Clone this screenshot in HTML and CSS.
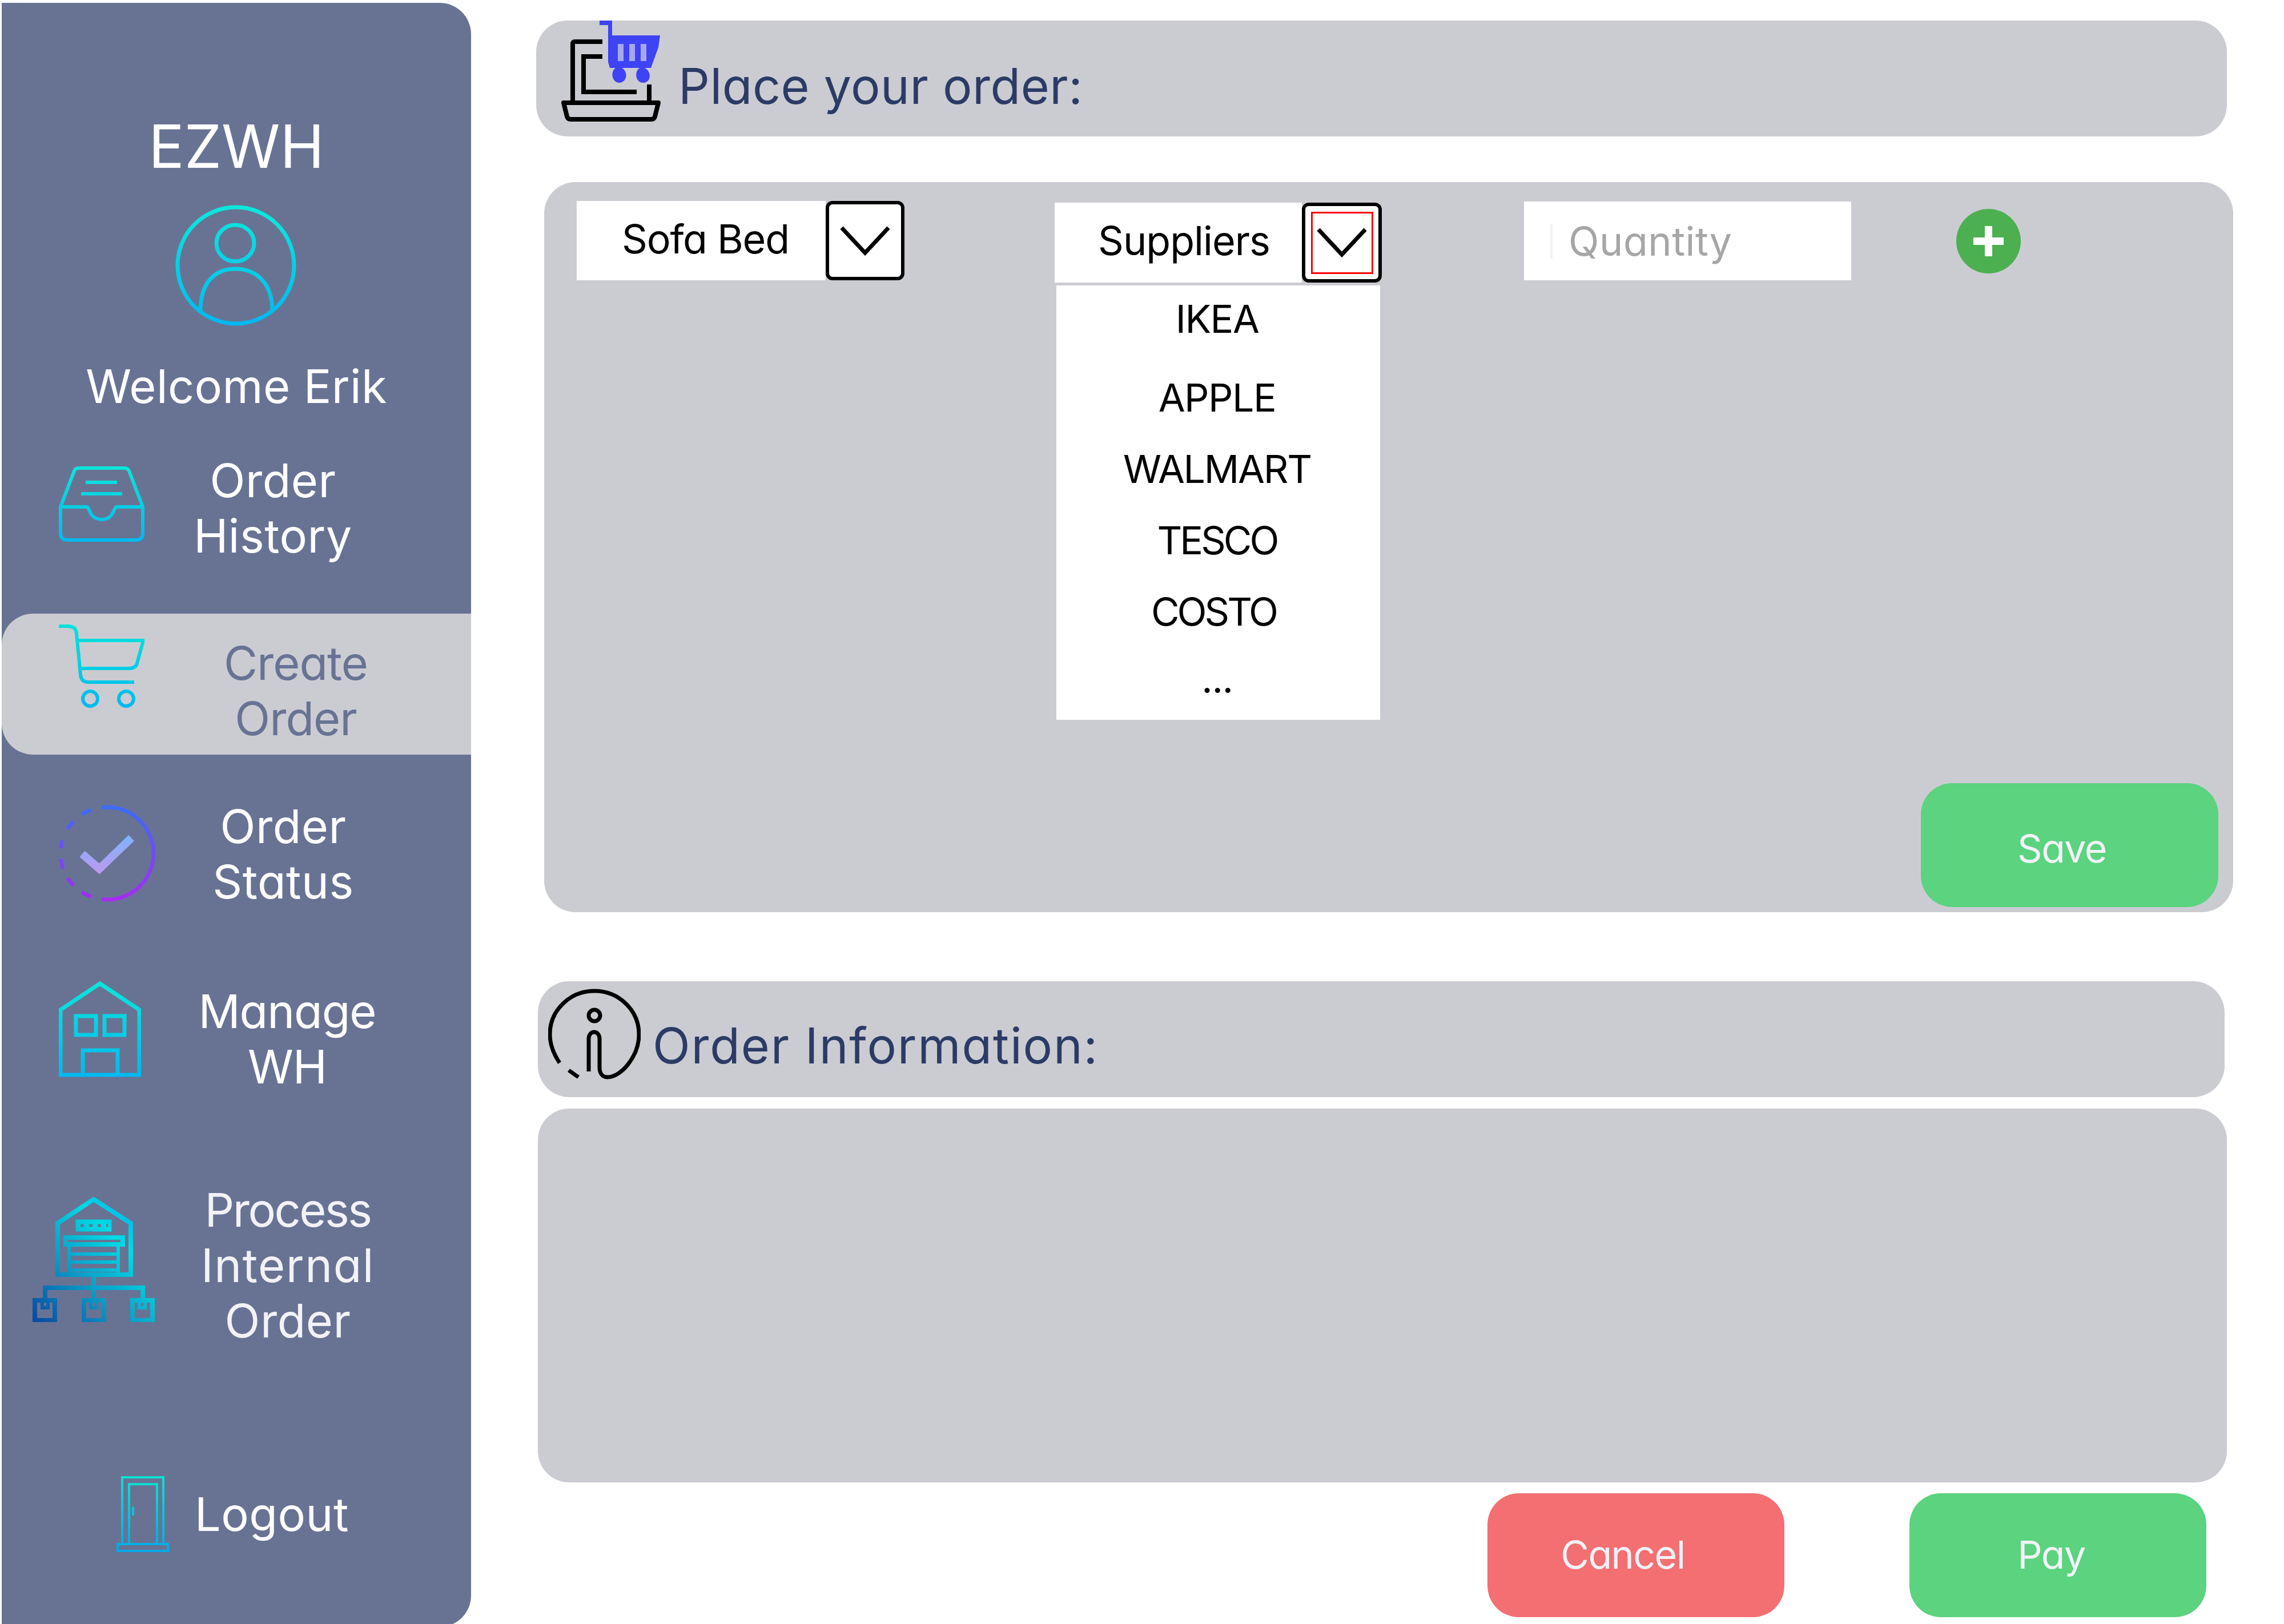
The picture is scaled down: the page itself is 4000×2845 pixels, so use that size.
FILE: index.html
```html
<!DOCTYPE html>
<html lang="en">
<head>
<meta charset="utf-8">
<title>EZWH - Create Order</title>
<link rel="stylesheet" href="styles.css">
</head>
<body>
<div class="app">
  <aside class="sidebar">
    <h1 class="brand">EZWH</h1>
    <svg class="avatar" viewBox="0 0 212 212" fill="none" stroke="url(#gAvatar)" stroke-width="7">
      <defs><linearGradient id="gAvatar" gradientUnits="userSpaceOnUse" x1="0" y1="0" x2="0" y2="212"><stop offset="0" stop-color="#0beadb"/><stop offset="1" stop-color="#00b7f1"/></linearGradient></defs>
      <circle cx="106" cy="106" r="102"/>
      <ellipse cx="105" cy="67" rx="33" ry="32"/>
      <path d="M44 186C44 135 70 112 105 112S170 135 170 186"/>
    </svg>
    <p class="welcome">Welcome Erik</p>
    <nav class="nav">
      <a class="nav-item item-history">
        <svg class="nav-icon icon-inbox" viewBox="0 0 150 134" fill="none" stroke="url(#gInbox)" stroke-width="6" stroke-linejoin="round">
          <defs><linearGradient id="gInbox" gradientUnits="userSpaceOnUse" x1="0" y1="0" x2="0" y2="134"><stop offset="0" stop-color="#0ce6d9"/><stop offset="1" stop-color="#00b9f0"/></linearGradient></defs>
          <path d="M3 72L27 9Q29 4 35 4H115Q121 4 123 9L147 72"/>
          <path d="M47 29H102M39 49H111"/>
          <path d="M3 72H49C54 72 53 94 75 94S96 72 101 72H147V118Q147 130 135 130H15Q3 130 3 118Z"/>
        </svg>
        <span class="nav-label">Order<br>History</span>
      </a>
      <a class="nav-item item-create">
        <svg class="nav-icon icon-cart" viewBox="0 0 150 148" fill="none" stroke="url(#gCart)" stroke-width="6">
          <defs><linearGradient id="gCart" gradientUnits="userSpaceOnUse" x1="0" y1="0" x2="0" y2="148"><stop offset="0" stop-color="#00e4da"/><stop offset="1" stop-color="#00b9ef"/></linearGradient></defs>
          <path d="M0 5H16Q30 5 31 18L38 90Q39 103 52 103H132"/>
          <path d="M30 30H148L137 70Q135 79 122 79H36"/>
          <circle cx="55" cy="132" r="13"/>
          <circle cx="118" cy="132" r="13"/>
        </svg>
        <span class="nav-label">Create<br>Order</span>
      </a>
      <a class="nav-item item-status">
        <svg class="nav-icon icon-check" viewBox="0 0 170 170" fill="none" stroke-width="7">
          <defs>
            <linearGradient id="gRing" gradientUnits="userSpaceOnUse" x1="0" y1="0" x2="0" y2="170"><stop offset="0" stop-color="#3b6ef5"/><stop offset="1" stop-color="#a62cf0"/></linearGradient>
            <linearGradient id="gTick" gradientUnits="userSpaceOnUse" x1="0" y1="55" x2="0" y2="115"><stop offset="0" stop-color="#7fb4ff"/><stop offset="1" stop-color="#b99aee"/></linearGradient>
          </defs>
          <path stroke="url(#gRing)" d="M75 4.6A81 81 0 1 1 75 165.4"/>
          <path stroke="url(#gRing)" d="M57 9Q47 12 40 17M26 29Q20 35 15 42M6 62Q4 68 4 76M4 95Q5 103 7 112M15 128Q20 135 26 141M40 153Q48 158 57 161"/>
          <path stroke="url(#gTick)" stroke-width="14" d="M41 86L71 112L127 58"/>
        </svg>
        <span class="nav-label">Order<br>Status</span>
      </a>
      <a class="nav-item item-manage">
        <svg class="nav-icon icon-house" viewBox="0 0 144 168" fill="none" stroke="url(#gHouse)" stroke-width="7">
          <defs><linearGradient id="gHouse" gradientUnits="userSpaceOnUse" x1="0" y1="0" x2="0" y2="168"><stop offset="0" stop-color="#0be7d9"/><stop offset="1" stop-color="#00b8f0"/></linearGradient></defs>
          <path d="M3 164V50L72 4L141 50V164Z"/>
          <rect x="30" y="61" width="35" height="33"/>
          <rect x="80" y="61" width="35" height="33"/>
          <path d="M42 164V121H103V164"/>
        </svg>
        <span class="nav-label">Manage<br>WH</span>
      </a>
      <a class="nav-item item-process">
        <svg class="nav-icon icon-depot" viewBox="0 0 214 219" fill="none" stroke="url(#gDepot)" stroke-width="8">
          <defs><linearGradient id="gDepot" gradientUnits="userSpaceOnUse" x1="0" y1="219" x2="180" y2="30"><stop offset="0" stop-color="#0a46a0"/><stop offset="0.45" stop-color="#0a9fc8"/><stop offset="0.8" stop-color="#00dbe5"/><stop offset="1" stop-color="#00b6ea"/></linearGradient></defs>
          <path d="M44 136V46L107 4L172 46V136Z"/>
          <rect x="78" y="42" width="58" height="16" stroke-width="5" fill="url(#gDepot)"/>
          <path stroke="#687394" stroke-width="5" stroke-dasharray="6 9" d="M84 50H132"/>
          <rect x="58" y="71" width="100" height="12"/>
          <path d="M64 84V136M150 84V136M64 100H150M64 114H150M64 128H150" stroke-width="6"/>
          <path d="M107 138V178M22 178V159H193V178"/>
          <rect x="4" y="181" width="35" height="35"/>
          <rect x="90" y="181" width="35" height="35"/>
          <rect x="175" y="181" width="35" height="35"/>
          <path stroke-width="6" d="M17 184V194H27V184M102 184V194H112V184M187 184V194H197V184"/>
        </svg>
        <span class="nav-label"><span class="line-tight">Process</span><br><span class="line-wide">Internal</span><br>Order</span>
      </a>
      <a class="nav-item item-logout">
        <svg class="nav-icon icon-door" viewBox="0 0 92 133" fill="none" stroke="url(#gDoor)" stroke-width="4">
          <defs><linearGradient id="gDoor" gradientUnits="userSpaceOnUse" x1="0" y1="0" x2="0" y2="133"><stop offset="0" stop-color="#0de2d2"/><stop offset="1" stop-color="#00a8e8"/></linearGradient></defs>
          <path d="M10 118V2H82V118"/>
          <path d="M22 118V14H71V118"/>
          <rect x="2" y="119" width="88" height="12"/>
          <path d="M29 54V69"/>
        </svg>
        <span class="nav-label">Logout</span>
      </a>
    </nav>
  </aside>
  <main class="main">
    <header class="bar bar-place">
      <svg class="bar-icon icon-order" viewBox="0 0 176 177" fill="none" stroke="#000" stroke-width="8">
        <path d="M21 141V41Q21 37 25 37H73"/>
        <path d="M73 63H40V125H133"/>
        <path d="M155 112V141"/>
        <path d="M5 144H171L165 168Q164 173 158 173H18Q12 173 11 168Z" stroke-linejoin="round"/>
        <path fill="#3e43f6" stroke="none" d="M68 0H90V26H174L171 47L158 83H147C158 88 160 106 146 109C131 110 128 90 138 83H107C117 88 118 106 104 109C90 110 86 90 96 83H86L83 73V8H68Z"/>
        <path fill="#a6a8ed" stroke="none" d="M100 41H110V71H100ZM120 41H130V71H120ZM140 41H150V71H140Z"/>
      </svg>
      <h2 class="bar-title title-place">Place your order:</h2>
    </header>
    <section class="order-card">
      <div class="order-row">
        <div class="select select-product">
          <span class="select-value">Sofa Bed</span>
          <span class="select-toggle">
            <svg class="chevron" viewBox="0 0 88 52" fill="none" stroke="#000" stroke-width="7"><path d="M3 3L44 47L85 3"/></svg>
          </span>
        </div>
        <div class="select select-supplier">
          <span class="select-value">Suppliers</span>
          <span class="select-toggle toggle-focus">
            <span class="focus-ring"><svg class="chevron" viewBox="0 0 88 52" fill="none" stroke="#000" stroke-width="7"><path d="M3 3L44 47L85 3"/></svg></span>
          </span>
          <ul class="menu">
            <li class="menu-first">IKEA</li>
            <li class="menu-second">APPLE</li>
            <li class="menu-walmart">WALMART</li>
            <li class="menu-tight">TESCO</li>
            <li class="menu-tight menu-shift">COSTO</li>
            <li class="menu-more">...</li>
          </ul>
        </div>
        <div class="qty"><span class="caret"></span><span class="qty-text">Quantity</span></div>
        <span class="add"><svg class="add-icon" viewBox="0 0 53 53" fill="#fff"><path d="M20 0H33V20H53V33H33V53H20V33H0V20H20Z"/></svg></span>
      </div>
      <button class="btn btn-save">Save</button>
    </section>
    <header class="bar bar-info">
      <svg class="bar-icon icon-info" viewBox="0 0 162 159" fill="none" stroke="#000" stroke-width="7">
        <path d="M20 130C8 112 3 96 3 80C3 38 38 4 81 4S159 38 159 80C159 118 128 155 104 155C95 155 90 148 90 138V88C90 72 71 72 71 88V145"/>
        <path d="M36 143L53 155"/>
        <circle cx="81" cy="47" r="10"/>
      </svg>
      <h2 class="bar-title title-info">Order Information:</h2>
    </header>
    <section class="info-panel"></section>
    <div class="actions">
      <button class="btn btn-cancel">Cancel</button>
      <button class="btn btn-pay">Pay</button>
    </div>
  </main>
</div>
</body>
</html>
```
FILE: styles.css
```css
* { box-sizing: border-box; }
html, body { margin: 0; padding: 0; height: 2845px; overflow: hidden; background: #fff; }
body { font-family: Inter, "Noto Sans", sans-serif; font-feature-settings: "cv11" 1; }
.app { display: flex; width: 4000px; height: 2845px; overflow: hidden; }

/* sidebar */
.sidebar { flex: none; width: 822px; height: 2845px; margin: 5px 0 0 3px; padding-top: 191px; background: #687394; color: #fff; border-radius: 0 55px 55px 0; display: flex; flex-direction: column; }
.brand { margin: 0; font-size: 104px; font-weight: 400; line-height: 120px; text-align: center; color: #fff; }
.avatar { display: block; width: 212px; height: 212px; margin: 43px 0 0 304px; }
.welcome { margin: 58px 0 0; font-size: 81px; line-height: 97px; text-align: center; letter-spacing: 0.4px; }
.nav { display: flex; flex-direction: column; }
.nav-item { display: grid; grid-template-columns: 300px 1fr; align-items: start; }
.nav-label { display: block; font-size: 81px; line-height: 97px; text-align: center; letter-spacing: 0.5px; }
.line-tight { letter-spacing: -2.5px; }
.line-wide { letter-spacing: 1.6px; }
.nav-icon { display: block; }
.item-history { margin-top: 68px; }
.item-history .nav-label { padding-right: 172px; }
.icon-inbox { width: 150px; height: 134px; margin: 22px 0 0 100px; }
.item-create { margin-top: 87px; height: 247px; background: #cbccd2; color: #687394; border-radius: 55px 0 0 55px; }
.item-create .nav-label { padding: 39px 92px 0 0; letter-spacing: -1px; }
.icon-cart { width: 150px; height: 148px; margin: 17px 0 0 100px; }
.item-status { margin-top: 78px; }
.item-status .nav-label { padding-right: 136px; }
.icon-check { width: 170px; height: 170px; margin: 10px 0 0 100px; }
.item-manage { margin-top: 125px; }
.item-manage .nav-label { padding: 5px 122px 0 0; letter-spacing: -1px; }
.icon-house { width: 144px; height: 168px; margin: 0 0 0 100px; }
.item-process { margin-top: 154px; color: #f2f2f7; }
.item-process .nav-label { padding-right: 120px; }
.icon-depot { width: 214px; height: 219px; margin: 25px 0 0 54px; }
.item-logout { margin-top: 223px; }
.item-logout .nav-label { padding: 19px 176px 0 0; }
.icon-door { width: 92px; height: 133px; margin: 0 0 0 201px; }

/* main */
.main { flex: none; width: 3175px; display: flex; flex-direction: column; align-items: flex-start; }
.bar { display: flex; align-items: flex-start; height: 203px; background: #cbccd2; border-radius: 55px; }
.bar-title { margin: 0; font-weight: 400; color: #2c3b66; white-space: nowrap; }
.bar-place { width: 2961px; margin: 36px 0 0 114px; padding-left: 43px; }
.icon-order { width: 176px; height: 177px; margin-right: 30px; flex: none; }
.title-place { font-size: 86px; line-height: 100px; margin-top: 65px; letter-spacing: 0.5px; }
.order-card { width: 2958px; height: 1279px; margin: 80px 0 0 128px; padding: 33px 26px 9px 57px; background: #cbccd2; border-radius: 55px; display: flex; flex-direction: column; justify-content: space-between; }
.order-row { display: flex; align-items: flex-start; }
.select { display: flex; position: relative; }
.select-product { width: 574px; height: 139px; }
.select-supplier { width: 573px; height: 140px; margin: 3px 0 0 263px; }
.select-value { flex: 1; background: #fff; color: #000; font-size: 70px; line-height: 133px; white-space: nowrap; letter-spacing: -1px; }
.select-product .select-value { padding-left: 79px; letter-spacing: -1.25px; }
.select-supplier .select-value { padding-left: 76px; }
.select-toggle { flex: none; width: 138px; background: #fff; border: 6px solid #000; border-radius: 12px; display: flex; align-items: center; justify-content: center; }
.toggle-focus { width: 140px; }
.focus-ring { width: 109px; height: 109px; border: 3px solid #f00; display: flex; align-items: center; justify-content: center; }
.chevron { width: 88px; height: 52px; display: block; }
.menu { position: absolute; left: 3px; top: 145px; width: 567px; height: 761px; margin: 0; padding: 8px 4px 0 0; list-style: none; background: #fff; color: #000; font-size: 68px; line-height: 125px; text-align: center; letter-spacing: -1.5px; }
.menu-first { line-height: 100px; }
.menu-second { margin-top: 26px; }
.menu-walmart { letter-spacing: -2.2px; }
.menu-tight { letter-spacing: -4px; }
.menu-shift { padding-right: 12px; }
.menu-more { margin-top: -7px; }
.qty { width: 573px; height: 138px; margin: 1px 0 0 249px; background: #fff; display: flex; align-items: center; padding-left: 46px; }
.caret { width: 4px; height: 61px; background: #f2f2f7; margin-right: 28px; }
.qty-text { color: #a6a6a6; font-size: 70px; letter-spacing: 0.5px; }
.add { flex: none; width: 113px; height: 113px; margin: 14px 0 0 184px; border-radius: 50%; background: #4caf50; display: flex; align-items: center; justify-content: center; }
.add-icon { width: 53px; height: 53px; display: block; }

.btn { display: block; width: 520px; height: 217px; border: 0; border-radius: 55px; font: inherit; font-size: 68px; letter-spacing: -1.5px; color: #f2f2f7; cursor: pointer; }
.btn-save { width: 521px; align-self: flex-end; background: #5bd37f; padding: 10px 27px 0 0; }
.bar-info { width: 2954px; margin: 121px 0 0 117px; padding-left: 18px; }
.icon-info { width: 162px; height: 159px; margin: 13px 21px 0 0; flex: none; }
.title-info { font-size: 86px; line-height: 100px; margin-top: 63px; letter-spacing: 1.8px; }
.info-panel { width: 2958px; height: 655px; margin: 20px 0 0 117px; background: #cbccd2; border-radius: 55px; }
.actions { display: flex; gap: 219px; margin: 19px 0 0 1780px; }
.btn-cancel { background: #f36f72; padding: 0 46px 3px 0; }
.btn-pay { background: #5bd37f; padding: 0 23px 3px 0; }
```
